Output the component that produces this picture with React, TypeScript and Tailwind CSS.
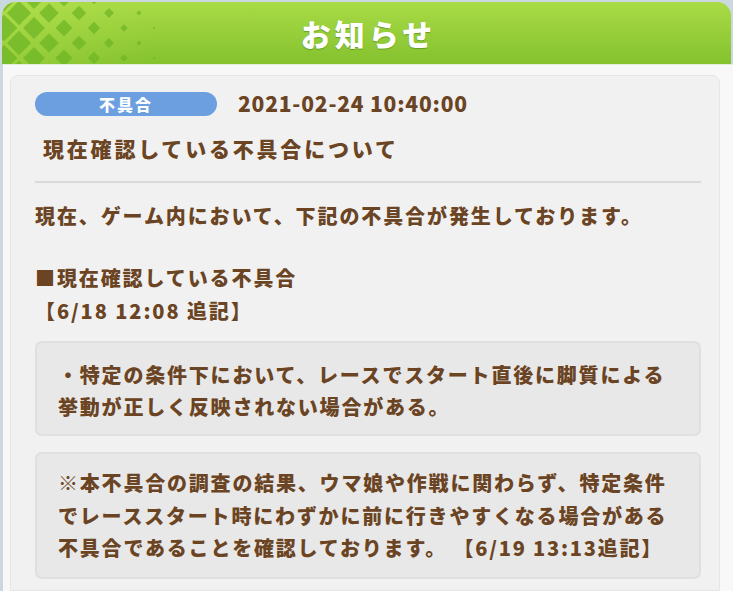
import React from "react";

const FONT = { fontFamily: '"Noto Sans CJK JP", "Noto Sans", sans-serif' };

function Pattern() {
  const items: React.ReactNode[] = [];
  for (let j = 0; j < 7; j++) {
    for (let i = 0; i < 7; i++) {
      const cx = i * 30 + (j % 2 === 0 ? 2 : 17);
      const cy = j * 15 - 4;
      const s = Math.max(0, 13.5 - cx * 0.08);
      if (s < 1) continue;
      items.push(
        <polygon
          key={`${i}-${j}`}
          points={`${cx},${cy - s} ${cx + s},${cy} ${cx},${cy + s} ${cx - s},${cy}`}
          fill="#6fb526"
          opacity={0.75}
        />
      );
    }
  }
  return (
    <svg className="absolute left-0 top-0" width="180" height="64" viewBox="0 0 180 64">
      <defs>
        <linearGradient id="fade" x1="0" x2="1" y1="0" y2="0">
          <stop offset="0" stopColor="#b8e352" stopOpacity="0.9" />
          <stop offset="1" stopColor="#b8e352" stopOpacity="0" />
        </linearGradient>
      </defs>
      <rect x="0" y="0" width="150" height="64" fill="url(#fade)" opacity="0.4" />
      {items}
    </svg>
  );
}

export default function App() {
  const text = "text-[#6b4423] font-black";
  return (
    <div className="w-[733px] h-[591px] overflow-hidden bg-[#cbd8df] flex flex-col" style={FONT}>
      <div className="relative ml-[2px] mr-[2px] mt-[2px] h-[62px] rounded-t-[14px] bg-gradient-to-b from-[#a9db46] to-[#84c22e] overflow-hidden flex items-center justify-center">
        <Pattern />
        <span className="relative text-white font-black text-[30px] tracking-[4px] pl-[4px] [text-shadow:0_1px_1px_rgba(60,110,20,0.5)]">
          お知らせ
        </span>
      </div>
      <div className="flex-1 ml-[3px] bg-[#f8f8f8] border-t border-[#e4eede] pl-[7px] pr-[13px] pt-[10px]">
        <div className="h-full rounded-t-[8px] bg-[#f1f1f1] border border-[#e6e6e6] pl-[24px] pr-[18px] pt-[16px]">
          <div className="flex items-center h-[24px]">
            <div className="w-[182px] h-[24px] rounded-full bg-[#6b9fe0] flex items-center justify-center text-white font-black text-[16px] tracking-[2px]">
              不具合
            </div>
            <div className={`${text} ml-[21px] text-[21px] tracking-[0.8px]`}>2021-02-24 10:40:00</div>
          </div>
          <div className={`${text} mt-[16px] ml-[8px] text-[21px] tracking-[2.8px] leading-[32px]`}>
            現在確認している不具合について
          </div>
          <div className="mt-[17px] h-[2px] bg-[#dadada]" />
          <div className={`${text} mt-[16px] text-[20px] tracking-[1.9px] leading-[33px]`}>
            <div>現在、ゲーム内において、下記の不具合が発生しております。</div>
            <div className="h-[29px]" />
            <div>■現在確認している不具合</div>
            <div>【6/18 12:08 追記】</div>
          </div>
          <div className={`mt-[14px] rounded-[7px] bg-[#e8e8e8] border-2 border-[#e0e0e0] pl-[21px] pr-[10px] pt-[16px] pb-[11px] ${text} text-[20px] tracking-[1.8px] leading-[32px]`}>
            <div>・特定の条件下において、レースでスタート直後に脚質による</div>
            <div>挙動が正しく反映されない場合がある。</div>
          </div>
          <div className={`mt-[16px] rounded-[7px] bg-[#e8e8e8] border-2 border-[#e0e0e0] pl-[21px] pr-[10px] pt-[13px] pb-[12px] ${text} text-[20px] tracking-[1.8px] leading-[32.5px]`}>
            <div>※本不具合の調査の結果、ウマ娘や作戦に関わらず、特定条件</div>
            <div>でレーススタート時にわずかに前に行きやすくなる場合がある</div>
            <div>不具合であることを確認しております。 【6/19 13:13追記】</div>
          </div>
        </div>
      </div>
    </div>
  );
}
